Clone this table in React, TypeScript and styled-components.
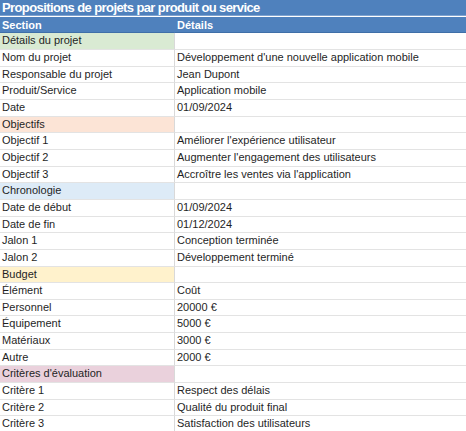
import React from 'react';
import styled, { createGlobalStyle } from 'styled-components';

const GlobalStyle = createGlobalStyle`
    html, body {
        margin: 0;
        padding: 0;
        background: #ffffff;
    }
    body {
        font-family: "Liberation Sans", Arial, sans-serif;
        color: #1f1f1f;
    }
`;

const Sheet = styled.div`
    width: 466px;
    display: grid;
    grid-template-columns: 175px 1fr;
    grid-auto-rows: 16.67px;
`;

const Title = styled.div`
    grid-column: 1 / 3;
    height: 16px;
    background: #4f81bd;
    color: #ffffff;
    font-weight: bold;
    font-size: 13px;
    letter-spacing: -0.6px;
    line-height: 16px;
    padding-left: 2px;
    border-bottom: 1px solid #7fa3d0;
    white-space: nowrap;
    box-sizing: border-box;
`;

const HeadCell = styled.div<{ $first?: boolean }>`
    background: #4f81bd;
    color: #ffffff;
    font-weight: bold;
    font-size: 11px;
    line-height: 16px;
    padding-left: 2px;
    border-right: ${p => (p.$first ? '1px solid #4f81bd' : 'none')};
    border-bottom: 1px solid #3f6fa8;
    box-sizing: border-box;
`;

type Tint = 'green' | 'peach' | 'blue' | 'yellow' | 'pink' | undefined;

const tints: Record<string, string> = {
    green: '#d9ead3',
    peach: '#fce4d6',
    blue: '#ddebf7',
    yellow: '#fff2cc',
    pink: '#ead1dc',
};

const Cell = styled.div<{ $tint?: Tint; $first?: boolean }>`
    background: ${p => (p.$tint ? tints[p.$tint] : '#ffffff')};
    font-size: 11px;
    line-height: 15.5px;
    padding-left: 2px;
    border-bottom: 1px solid #e3e3e3;
    border-right: ${p => (p.$first ? '1px solid #d9d9d9' : 'none')};
    white-space: nowrap;
    overflow: hidden;
    box-sizing: border-box;
`;

type Row = [string, string] | { section: string; tint: Tint };

const rows: Row[] = [
    { section: 'Détails du projet', tint: 'green' },
    ['Nom du projet', "Développement d'une nouvelle application mobile"],
    ['Responsable du projet', 'Jean Dupont'],
    ['Produit/Service', 'Application mobile'],
    ['Date', '01/09/2024'],
    { section: 'Objectifs', tint: 'peach' },
    ['Objectif 1', "Améliorer l'expérience utilisateur"],
    ['Objectif 2', "Augmenter l'engagement des utilisateurs"],
    ['Objectif 3', "Accroître les ventes via l'application"],
    { section: 'Chronologie', tint: 'blue' },
    ['Date de début', '01/09/2024'],
    ['Date de fin', '01/12/2024'],
    ['Jalon 1', 'Conception terminée'],
    ['Jalon 2', 'Développement terminé'],
    { section: 'Budget', tint: 'yellow' },
    ['Élément', 'Coût'],
    ['Personnel', '20000 €'],
    ['Équipement', '5000 €'],
    ['Matériaux', '3000 €'],
    ['Autre', '2000 €'],
    { section: "Critères d'évaluation", tint: 'pink' },
    ['Critère 1', 'Respect des délais'],
    ['Critère 2', 'Qualité du produit final'],
    ['Critère 3', 'Satisfaction des utilisateurs'],
];

const App: React.FC = (): JSX.Element => {
    return (
        <>
            <GlobalStyle />
            <Sheet>
                <Title>Propositions de projets par produit ou service</Title>
                <HeadCell $first>Section</HeadCell>
                <HeadCell>Détails</HeadCell>
                {rows.map((row, i) =>
                    Array.isArray(row) ? (
                        <React.Fragment key={i}>
                            <Cell $first>{row[0]}</Cell>
                            <Cell>{row[1]}</Cell>
                        </React.Fragment>
                    ) : (
                        <React.Fragment key={i}>
                            <Cell $first $tint={row.tint}>{row.section}</Cell>
                            <Cell />
                        </React.Fragment>
                    )
                )}
            </Sheet>
        </>
    );
};

export default App;
